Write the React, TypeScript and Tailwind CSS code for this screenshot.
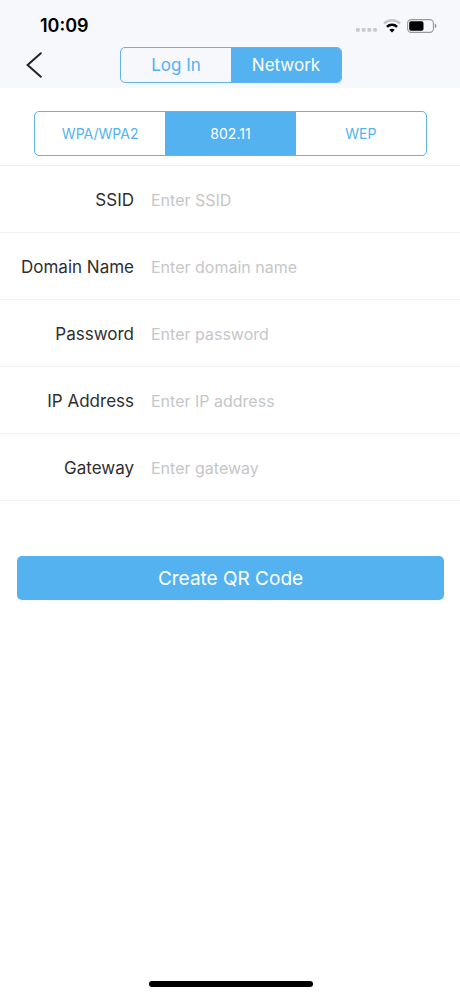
import { useState } from "react";
import clsx from "clsx";

const fields = [
  { id: "ssid", label: "SSID", placeholder: "Enter SSID" },
  { id: "domain", label: "Domain Name", placeholder: "Enter domain name" },
  { id: "password", label: "Password", placeholder: "Enter password" },
  { id: "ip", label: "IP Address", placeholder: "Enter IP address" },
  { id: "gateway", label: "Gateway", placeholder: "Enter gateway" },
];

const securityTypes = ["WPA/WPA2", "802.11", "WEP"];

function StatusBar() {
  return (
    <div className="flex h-[47px] items-center justify-between pt-1 pr-[23px] pl-10">
      <span className="text-lg leading-6 font-semibold text-black">10:09</span>
      <div className="flex items-center">
        <svg className="mr-[6px]" width="21" height="16" viewBox="0 0 21 16" fill="#c9cacf" aria-hidden="true">
          <rect x="0" y="10" width="3.8" height="3.8" rx="1" />
          <rect x="5.7" y="10" width="3.8" height="3.8" rx="1" />
          <rect x="11.4" y="10" width="3.8" height="3.8" rx="1" />
          <rect x="17.1" y="10" width="3.8" height="3.8" rx="1" />
        </svg>
        <svg className="mr-[6px]" width="18" height="14" viewBox="0 0 18 14" fill="none" aria-hidden="true">
          <path d="M1 4.6C5.4 0.2 12.6 0.2 17 4.6" stroke="#c6c7cb" strokeWidth="2.4" />
          <path d="M3.9 7.8C6.8 5 11.2 5 14.1 7.8" stroke="#000" strokeWidth="2.5" />
          <path d="M9 13.4L6.3 10.7C7.8 9.3 10.2 9.3 11.7 10.7Z" fill="#000" />
        </svg>
        <svg width="30" height="14" viewBox="0 0 30 14" fill="none" aria-hidden="true">
          <rect x="0.6" y="0.6" width="25.8" height="12.8" rx="3.6" stroke="#97989b" strokeWidth="1.1" />
          <rect x="2.2" y="2.2" width="14.3" height="9.6" rx="1.8" fill="#000" />
          <path d="M27.8 4.8C29.9 5.4 29.9 8.6 27.8 9.2Z" fill="#8d8e92" />
        </svg>
      </div>
    </div>
  );
}

export default function App() {
  const [tab, setTab] = useState("Network");
  const [security, setSecurity] = useState("802.11");

  return (
    <div className="flex min-h-screen flex-col bg-white font-['Inter',sans-serif]">
      <header className="bg-[#f7f8fc]">
        <StatusBar />
        <nav className="grid h-[41px] grid-cols-[1fr_222px_1fr] items-start pl-0.5">
          <button type="button" aria-label="Back" className="ml-6 flex h-9 w-5 items-center">
            <svg width="17" height="26" viewBox="0 0 17 26" fill="none" stroke="#222326" strokeWidth="2" aria-hidden="true">
              <path d="M14.8 1.2L1.6 13L14.8 24.8" strokeLinecap="round" />
            </svg>
          </button>
          <div className="grid h-9 grid-cols-2 overflow-hidden rounded-[5px] border border-[#62b2ec]">
            {["Log In", "Network"].map((name) => (
              <button
                key={name}
                type="button"
                aria-pressed={tab === name}
                onClick={() => setTab(name)}
                className={clsx("pt-0.5 text-[17px]", tab === name ? "bg-[#54b2f0] text-white" : "text-[#54b2f0]")}
              >
                {name}
              </button>
            ))}
          </div>
        </nav>
      </header>

      <main>
        <div className="mt-[23px] mr-[33px] ml-[34px] grid h-[45px] grid-cols-3 overflow-hidden rounded-[5px] border border-[#62b2ec]">
          {securityTypes.map((name) => (
            <button
              key={name}
              type="button"
              aria-pressed={security === name}
              onClick={() => setSecurity(name)}
              className={clsx("text-sm", security === name ? "bg-[#54b2f0] text-white" : "text-[#54b2f0]")}
            >
              {name}
            </button>
          ))}
        </div>

        <form onSubmit={(e) => e.preventDefault()}>
          <div className="mt-[9px] border-t border-[#f0f0f1]">
            {fields.map((field) => (
              <div key={field.id} className="flex h-[67px] items-center gap-[17px] border-b border-[#f0f0f1]">
                <label htmlFor={field.id} className="w-[134px] shrink-0 pt-[3px] text-right text-[17px] text-[#2e2e30]">
                  {field.label}
                </label>
                <input
                  id={field.id}
                  type={field.id === "password" ? "password" : "text"}
                  placeholder={field.placeholder}
                  className="min-w-0 flex-1 pt-px text-base text-[#2e2e30] outline-none placeholder:text-[#c6c6c9]"
                />
              </div>
            ))}
          </div>
          <div className="pt-[55px] pr-4 pl-[17px]">
            <button type="submit" className="h-11 w-full rounded-[5px] bg-[#54b2f0] pt-0.5 text-[19px] text-white">
              Create QR Code
            </button>
          </div>
        </form>
      </main>

      <div className="mt-auto flex justify-center pb-[9px] pl-0.5">
        <div className="h-[6px] w-[164px] rounded-full bg-black" />
      </div>
    </div>
  );
}
